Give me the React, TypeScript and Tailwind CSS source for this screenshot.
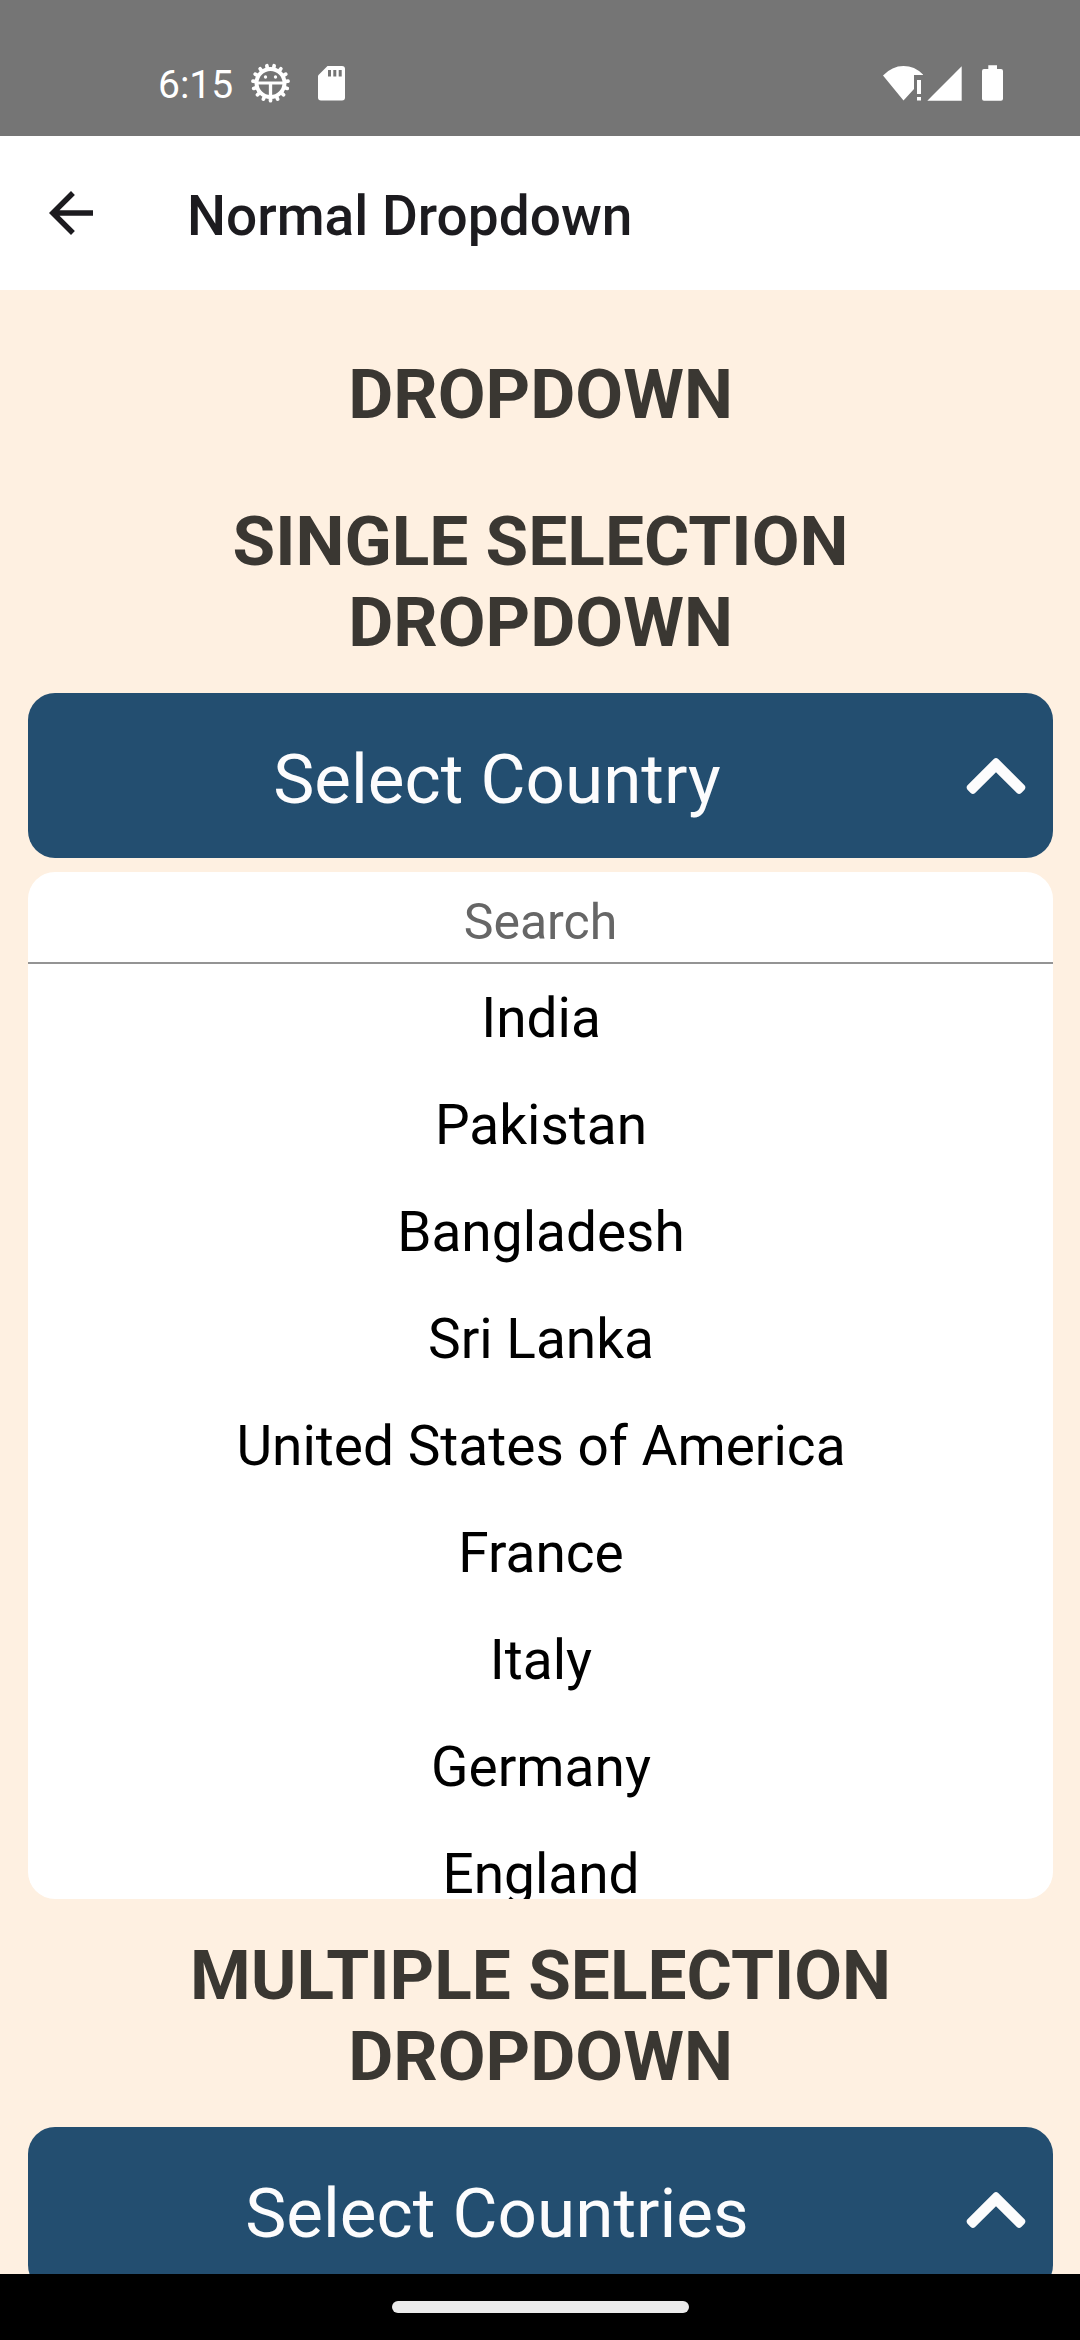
const countries = [
  "India",
  "Pakistan",
  "Bangladesh",
  "Sri Lanka",
  "United States of America",
  "France",
  "Italy",
  "Germany",
  "England",
];

const teeth = Array.from({ length: 15 }, (_, i) => Math.PI / 2 + (i * 2 * Math.PI) / 15);

function DebugIcon() {
  return (
    <svg className="ml-[18px] h-10 w-[39px]" viewBox="-58.5 -60 117 120" fill="none" stroke="#fff">
      <circle r="42" strokeWidth="12" />
      {teeth.map((a) => (
        <line
          key={a}
          x1={Math.cos(a) * 44}
          y1={Math.sin(a) * 44}
          x2={Math.cos(a) * 53}
          y2={Math.sin(a) * 53}
          strokeWidth="11"
          strokeLinecap="round"
        />
      ))}
      <path d="M-40 0H40" strokeWidth="9" />
      <path d="M0 0V42" strokeWidth="10" />
      <circle cx="-15" cy="-18" r="5" fill="#fff" stroke="none" />
      <circle cx="15" cy="-18" r="5" fill="#fff" stroke="none" />
    </svg>
  );
}

function SdCardIcon() {
  return (
    <svg className="ml-[28px] h-[35px] w-[27px]" viewBox="0 0 27 35">
      <path fill="#fff" d="M9.5 0H24a3 3 0 0 1 3 3v28.500a3 3 0 0 1-3 3H3a3 3 0 0 1-3-3V9.500z" />
      <path fill="#757575" d="M10 4h3v6.500h-3zM15.300 4h3v6.500h-3zM20.700 4h3v6.500h-3z" />
    </svg>
  );
}

function WifiIcon() {
  return (
    <svg className="h-[35px] w-[40px]" viewBox="0 0 40 35" fill="#fff">
      <path d="M0 9.500Q9 0 20.500 0T40.500 9H31v14L20.500 34.500z" />
      <path d="M34 14h4v14h-4zM34 31h4v3.500h-4z" />
    </svg>
  );
}

function SignalIcon() {
  return (
    <svg className="ml-[4px] h-[35px] w-[35px]" viewBox="0 0 35 35" fill="#fff">
      <path d="M34.700 0.300V34.700H0.300z" />
    </svg>
  );
}

function BatteryIcon() {
  return (
    <svg className="ml-[20px] h-[36px] w-[21px]" viewBox="0 0 21 36" fill="#fff">
      <path d="M6.300 0.300h8.700V4H19a2 2 0 0 1 2 2V33.700a2 2 0 0 1-2 2H2a2 2 0 0 1-2-2V6a2 2 0 0 1 2-2h4.300z" />
    </svg>
  );
}

function ChevronUp() {
  return (
    <svg className="h-[36px] w-[60px] shrink-0" viewBox="0 0 60 36">
      <path
        d="M27.800 1q2.200-2 4.400 0L58.500 27.300q1.800 2.200 0 4.400l-3.200 3.300q-2.200 1.800-4.400 0L30 14.300 9.100 35q-2.200 1.800-4.400 0l-3.200-3.300q-1.800-2.200 0-4.400z"
        fill="#fcfcfd"
      />
    </svg>
  );
}

function SelectButton({ label }: { label: string }) {
  return (
    <button className="flex h-[165px] w-full shrink-0 items-center rounded-[27px] bg-[#234e70] pr-[27px] text-[69.2px] leading-[81px] text-[#fcfcfd]">
      <span className="flex-1 pt-[7px] text-center">{label}</span>
      <ChevronUp />
    </button>
  );
}

export default function App() {
  return (
    <div className="flex h-[2340px] w-[1080px] flex-col overflow-hidden bg-[#fef0e1] font-['Roboto',sans-serif]">
      <div className="flex h-[136px] shrink-0 items-center bg-[#757575] pt-[30px] pr-[77px] pl-[158px]">
        <span className="pt-[3px] text-[39px] leading-[46px] text-white">6:15</span>
        <DebugIcon />
        <SdCardIcon />
        <div className="flex-1" />
        <WifiIcon />
        <SignalIcon />
        <BatteryIcon />
      </div>

      <header className="flex h-[154px] shrink-0 items-center bg-white pl-[49px] text-[#1c1b1f]">
        <svg className="h-11 w-11" viewBox="4 4 16 16" fill="currentColor">
          <path d="M20 11H7.830l5.590-5.590L12 4l-8 8 8 8 1.410-1.410L7.830 13H20z" />
        </svg>
        <h1 className="ml-[94px] pt-[5px] text-[55px] leading-[64px] font-medium">Normal Dropdown</h1>
      </header>

      <main className="flex min-h-0 flex-1 flex-col overflow-hidden pr-[27px] pl-[28px] pt-[64px]">
        <h2 className="text-center text-[69.4px] leading-[81px] font-bold text-[#3a3732]">DROPDOWN</h2>
        <h2 className="mt-[66px] mb-[30px] text-center text-[69.4px] leading-[81px] font-bold text-[#3a3732]">
          SINGLE SELECTION
          <br />
          DROPDOWN
        </h2>
        <SelectButton label="Select Country" />

        <div className="mt-[14px] h-[1027px] shrink-0 overflow-hidden rounded-[27px] bg-white">
          <div className="h-[92px] border-b-2 border-[#949494] pt-[20px]">
            <input
              className="block h-[60px] w-full bg-transparent text-center text-[50px] leading-[60px] outline-none placeholder:text-[#666]"
              placeholder="Search"
            />
          </div>
          <ul className="pt-px pl-px text-center text-[55px] text-black">
            {countries.map((name) => (
              <li key={name} className="h-[107px] leading-[107px]">
                {name}
              </li>
            ))}
          </ul>
        </div>

        <h2 className="mt-[36px] mb-[30px] text-center text-[69.4px] leading-[81px] font-bold text-[#3a3732]">
          MULTIPLE SELECTION
          <br />
          DROPDOWN
        </h2>
        <SelectButton label="Select Countries" />
      </main>

      <div className="flex h-[66px] shrink-0 justify-center bg-black pt-[27px]">
        <div className="h-[12px] w-[297px] rounded-full bg-[#ebebeb]" />
      </div>
    </div>
  );
}
